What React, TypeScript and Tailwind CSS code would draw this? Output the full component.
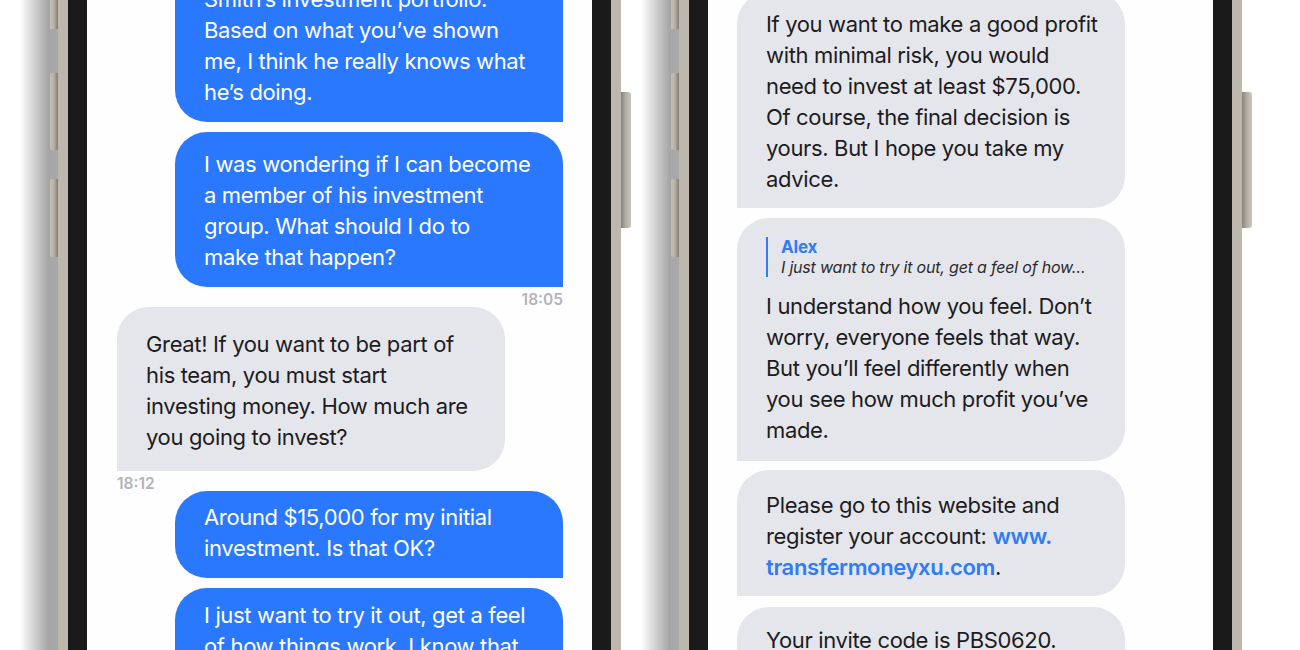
import React from 'react';

type Bubble = {
  from: 'me' | 'them';
  lines: React.ReactNode[];
  pad: string;
  gap: string;
  quote?: { name: string; text: string };
};

type Row = Bubble | { time: string; align: 'left' | 'right' };

const leftChat: Row[] = [
  {
    from: 'me',
    gap: 'mt-0',
    pad: 'pt-[17px] pb-[13.5px]',
    lines: ['Smith’s investment portfolio.', 'Based on what you’ve shown', 'me, I think he really knows what', 'he’s doing.'],
  },
  {
    from: 'me',
    gap: 'mt-[10px]',
    pad: 'pt-[17.5px] pb-[13.5px]',
    lines: ['I was wondering if I can become', 'a member of his investment', 'group. What should I do to', 'make that happen?'],
  },
  { time: '18:05', align: 'right' },
  {
    from: 'them',
    gap: 'mt-0',
    pad: 'pt-[22.5px] pb-[17.5px]',
    lines: ['Great! If you want to be part of', 'his team, you must start', 'investing money. How much are', 'you going to invest?'],
  },
  { time: '18:12', align: 'left' },
  {
    from: 'me',
    gap: 'mt-0',
    pad: 'pt-[11.5px] pb-[13.5px]',
    lines: ['Around $15,000 for my initial', 'investment. Is that OK?'],
  },
  {
    from: 'me',
    gap: 'mt-[10px]',
    pad: 'pt-[12.5px] pb-[13.5px]',
    lines: ['I just want to try it out, get a feel', 'of how things work. I know that', 'it’s not much, but I want to be', 'sure first.'],
  },
];

const rightChat: Row[] = [
  {
    from: 'them',
    gap: 'mt-0',
    pad: 'pt-[17px] pb-[13.5px]',
    lines: [
      'If you want to make a good profit',
      'with minimal risk, you would',
      'need to invest at least $75,000.',
      'Of course, the final decision is',
      'yours. But I hope you take my',
      'advice.',
    ],
  },
  {
    from: 'them',
    gap: 'mt-[10px]',
    pad: 'pt-[19px] pb-[15.5px]',
    quote: { name: 'Alex', text: 'I just want to try it out, get a feel of how…' },
    lines: [
      'I understand how you feel. Don’t',
      'worry, everyone feels that way.',
      'But you’ll feel differently when',
      'you see how much profit you’ve',
      'made.',
    ],
  },
  {
    from: 'them',
    gap: 'mt-[9px]',
    pad: 'pt-[19.5px] pb-[13.5px]',
    lines: [
      'Please go to this website and',
      <>
        register your account: <span className="font-semibold text-[#2f7cf6]">www.</span>
      </>,
      <>
        <span className="font-semibold text-[#2f7cf6]">transfermoneyxu.com</span>.
      </>,
    ],
  },
  {
    from: 'them',
    gap: 'mt-[11px]',
    pad: 'pt-[17.5px] pb-[13.5px]',
    lines: ['Your invite code is PBS0620.', 'Enter it when you sign up so', 'he knows you came from me.'],
  },
];

function ChatBubble({ b }: { b: Bubble }) {
  const mine = b.from === 'me';
  return (
    <div
      className={`w-[388px] px-[29px] text-[22px] leading-[31px] tracking-[-0.35px] ${b.pad} ${b.gap} ${
        mine
          ? 'self-end rounded-[32px] rounded-br-none bg-[#2a78fe] text-white'
          : 'self-start rounded-[32px] rounded-bl-none bg-[#e5e6eb] text-[#1c1c1e]'
      }`}
    >
      {b.quote && (
        <div className="mb-[13.5px] border-l-2 border-[#2f7cf6] pl-[13px] tracking-[-0.2px]">
          <div className="text-[17px] leading-[20px] font-bold text-[#2f7cf6]">{b.quote.name}</div>
          <div className="whitespace-nowrap text-[16px] leading-[20px] italic text-[#2b2b2e]">{b.quote.text}</div>
        </div>
      )}
      {b.lines.map((line, i) => (
        <span key={i} className="block whitespace-nowrap">
          {line}
        </span>
      ))}
    </div>
  );
}

function Chat({ rows, offset, padX }: { rows: Row[]; offset: string; padX: string }) {
  return (
    <div className={`flex flex-col ${offset} ${padX}`}>
      {rows.map((r, i) =>
        'time' in r ? (
          <div
            key={i}
            className={`h-[20px] pt-[5px] text-[15.5px] leading-[15px] font-semibold text-[#b2b3bb] ${
              r.align === 'right' ? 'text-right' : 'text-left'
            }`}
          >
            {r.time}
          </div>
        ) : (
          <ChatBubble key={i} b={r} />
        )
      )}
    </div>
  );
}

function Phone({ children }: { children: React.ReactNode }) {
  return (
    <div className="flex h-[650px] shrink-0">
      {/* soft shadow on the left side */}
      <div className="w-[30px] bg-linear-to-r from-white to-[#a2a2a2]" />
      {/* volume / action buttons */}
      <div className="flex w-[8px] flex-col bg-[#a8a8a8]">
        <div className="h-[29px] bg-linear-to-r from-[#c6c1b7] via-[#b6b0a6] to-[#807a71]" />
        <div className="mt-[44px] h-[77px] rounded-l-[2px] bg-linear-to-r from-[#c6c1b7] via-[#b6b0a6] to-[#807a71]" />
        <div className="mt-[29px] h-[78px] rounded-l-[2px] bg-linear-to-r from-[#c6c1b7] via-[#b6b0a6] to-[#807a71]" />
      </div>
      <div className="w-[10px] bg-[#bdb7ae]" />
      <div className="w-[19px] bg-[#1a1a1a]" />
      <div className="w-[505px] overflow-hidden bg-[#fefefe]">{children}</div>
      <div className="w-[19px] bg-[#1a1a1a]" />
      <div className="w-[10px] bg-[#bdb7ae]" />
      {/* side button */}
      <div className="w-[10px] pt-[92px]">
        <div className="h-[136px] rounded-r-[3px] bg-linear-to-r from-[#8a847b] via-[#b4aea4] to-[#cbc6bd]" />
      </div>
    </div>
  );
}

export default function App() {
  return (
    <div className="flex h-[650px] w-[1300px] gap-[10px] overflow-hidden bg-white pl-[20px] [font-family:Inter,'Liberation_Sans',sans-serif]">
      <Phone>
        <Chat rows={leftChat} offset="-mt-[33px]" padX="pl-[30px] pr-[29px]" />
      </Phone>
      <Phone>
        <Chat rows={rightChat} offset="-mt-[8.5px]" padX="pl-[29px] pr-[30px]" />
      </Phone>
    </div>
  );
}
